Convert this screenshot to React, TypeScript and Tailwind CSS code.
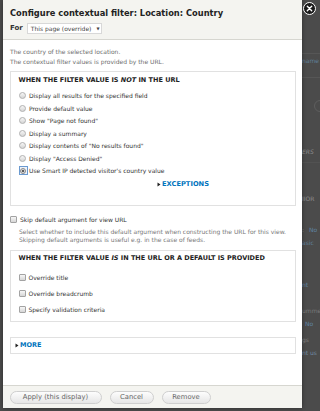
import React from "react";

function Radio({ checked }: { checked?: boolean }) {
  if (checked) {
    return (
      <span className="relative flex h-[9px] w-[9px] shrink-0 items-center justify-center border border-[#6b9ad0] bg-[#eef3fa]">
        <span className="flex h-[6px] w-[6px] items-center justify-center rounded-full border border-[#8a8a8a] bg-[#d9d9d9]">
          <span className="h-[2.5px] w-[2.5px] rounded-full bg-[#333]" />
        </span>
      </span>
    );
  }
  return (
    <span className="h-[7px] w-[7px] shrink-0 rounded-full border border-[#b0b0b0] bg-gradient-to-b from-[#f6f6f6] to-[#d6d6d6]" />
  );
}

function Check() {
  return (
    <span className="h-[7px] w-[7px] shrink-0 rounded-[1px] border border-[#a3a3a3] bg-gradient-to-b from-[#f6f6f6] to-[#d6d6d6]" />
  );
}

function Tri() {
  return (
    <svg width="4" height="5" viewBox="0 0 4 5" className="shrink-0">
      <path d="M0.5 0.5 L3.5 2.5 L0.5 4.5 Z" fill="#222" />
    </svg>
  );
}

const radios = [
  "Display all results for the specified field",
  "Provide default value",
  'Show "Page not found"',
  "Display a summary",
  'Display contents of "No results found"',
  'Display "Access Denied"',
  "Use Smart IP detected visitor's country value",
];

export default function App() {
  return (
    <div
      className="relative h-[411px] w-[320px] overflow-hidden bg-[#4b4b4b]"
      style={{ fontFamily: '"DejaVu Sans", Verdana, sans-serif' }}
    >
      {/* background page (visible strip at right) */}
      <div className="flex flex-col pl-[302px] text-[6px] leading-[8px]">
        <div className="mt-[53px] h-px w-full bg-[#565656]" />
        <div className="mt-[3px] text-[#5f7f99]">name</div>
        <div className="mt-[12px] h-px w-full bg-[#565656]" />
        <div className="ml-[12px] mt-[22px] h-[12px] w-[12px] rounded-full border border-[#5e5e5e]" />
        <div className="mt-[36px] italic text-[#8a8a8a]">ERS</div>
        <div className="mt-[6px] h-px w-full bg-[#525252]" />
        <div className="mt-[32px] text-[#8d8d8d]">IIOR</div>
        <div className="mt-[23px] text-[#7f7f7f]">
          : <span className="ml-[3px] text-[#5f84a3]">No</span>
        </div>
        <div className="mt-[5px] text-[#5f7f99]">asic</div>
        <div className="mt-[34px] text-[#5f84a3]">nt</div>
        <div className="mt-[18px] text-[#7a7a7a]">umme</div>
        <div className="ml-[3px] mt-[5px] text-[#5f84a3]">No</div>
        <div className="mt-[8px] text-[#7f7f7f]">gs</div>
        <div className="mt-[5px] text-[#6f8aa2]">nt us</div>
      </div>

      {/* dialog */}
      <div className="absolute left-[3px] top-0 flex h-[408px] w-[299px] flex-col bg-white shadow-[0_0_4px_rgba(0,0,0,0.4)]">
        {/* title bar */}
        <div className="h-[40px] shrink-0 border-b border-[#d6d6d0] bg-[#f4f4f0] pl-[7px] pt-[7px]">
          <div className="text-[8.3px] font-bold leading-[12px] text-[#222]">
            Configure contextual filter: Location: Country
          </div>
          <div className="mt-[4px] flex h-[11px] items-center">
            <span className="text-[7px] font-bold text-[#333]">For</span>
            <div className="ml-[4px] flex h-[11px] w-[75px] items-center border border-[#d8d8d8] bg-white pl-[3px] text-[6px] text-[#444]">
              <span>This page (override)</span>
              <span className="ml-[5px] text-[4px]">▼</span>
            </div>
          </div>
        </div>

        {/* body */}
        <div className="flex flex-1 flex-col px-[6.5px] pt-[7px]">
          <div className="pl-[0.5px] text-[6px] leading-[10px] text-[#6e6e6e]">
            <div>The country of the selected location.</div>
            <div>The contextual filter values is provided by the URL.</div>
          </div>

          {/* fieldset 1 */}
          <div className="mt-[4px] flex h-[135px] flex-col border border-[#e1e1e1] px-[8px] pt-[4px]">
            <div className="text-[6.5px] font-bold leading-[9px] text-[#222]">
              WHEN THE FILTER VALUE IS <em>NOT</em> IN THE URL
            </div>
            <div className="mt-[4.5px] flex flex-col">
              {radios.map((r, i) => (
                <div key={i} className="flex h-[12.5px] items-center">
                  <span className="flex w-[10px] justify-start">
                    <Radio checked={i === 6} />
                  </span>
                  <span className="ml-[0.5px] text-[6px] text-[#333]">{r}</span>
                </div>
              ))}
            </div>
            <div className="mt-[2px] flex h-[10px] items-center pl-[138px]">
              <Tri />
              <span className="ml-[1.5px] text-[6.7px] font-bold text-[#0074bd]">EXCEPTIONS</span>
            </div>
          </div>

          {/* skip */}
          <div className="mt-[8px] flex h-[10px] items-center pl-[0.5px]">
            <Check />
            <span className="ml-[3px] text-[6px] text-[#333]">Skip default argument for view URL</span>
          </div>
          <div className="mt-[4px] pl-[9.5px] text-[6px] leading-[8px] text-[#777]">
            <div>Select whether to include this default argument when constructing the URL for this view.</div>
            <div>Skipping default arguments is useful e.g. in the case of feeds.</div>
          </div>

          {/* fieldset 2 */}
          <div className="mt-[6px] flex h-[72px] flex-col border border-[#e1e1e1] px-[8px] pt-[3px]">
            <div className="text-[6.5px] font-bold leading-[9px] text-[#222]">
              WHEN THE FILTER VALUE <em>IS</em> IN THE URL OR A DEFAULT IS PROVIDED
            </div>
            <div className="mt-[6.3px] flex flex-col">
              {["Override title", "Override breadcrumb", "Specify validation criteria"].map((c) => (
                <div key={c} className="flex h-[16px] items-center">
                  <span className="flex w-[10px]">
                    <Check />
                  </span>
                  <span className="text-[6px] text-[#333]">{c}</span>
                </div>
              ))}
            </div>
          </div>

          {/* fieldset 3 */}
          <div className="mt-[15px] flex h-[17px] items-center border border-[#e1e1e1] pl-[4px]">
            <Tri />
            <span className="ml-[1.5px] text-[6.5px] font-bold text-[#0074bd]">MORE</span>
          </div>
        </div>

        {/* footer */}
        <div className="flex h-[23px] shrink-0 items-center gap-[8px] border-t border-[#d6d6d0] bg-[#f4f4f0] pl-[6.5px]">
          {["Apply (this display)", "Cancel", "Remove"].map((b, i) => (
            <div
              key={b}
              className={`flex h-[13px] items-center justify-center rounded-full border border-[#cfcfcf] bg-gradient-to-b from-[#fdfdfd] to-[#e6e6e6] text-[6.8px] text-[#666] ${
                i === 0 ? "w-[92px]" : i === 1 ? "w-[44px]" : "w-[49px]"
              }`}
            >
              {b}
            </div>
          ))}
        </div>
      </div>

      {/* close button */}
      <div className="absolute left-[303px] top-[1.5px] flex h-[13px] w-[13px] items-center justify-center rounded-full border border-white bg-[#1a1a1a]">
        <svg width="7" height="7" viewBox="0 0 7 7">
          <path d="M1.3 1.3 L5.7 5.7 M5.7 1.3 L1.3 5.7" stroke="#fff" strokeWidth="1.4" strokeLinecap="round" />
        </svg>
      </div>
    </div>
  );
}
